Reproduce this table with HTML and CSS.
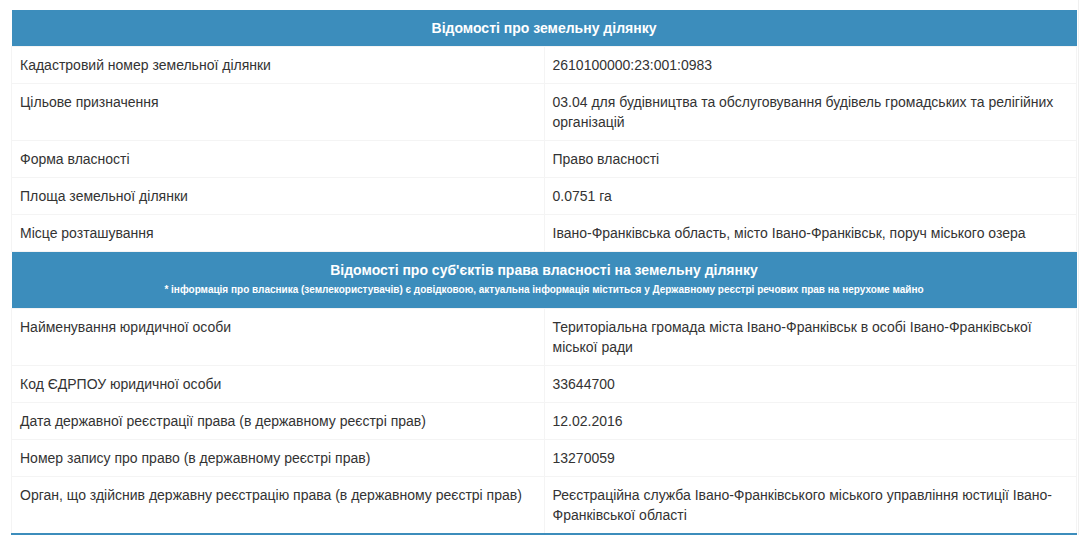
FILE: index.html
```html
<!DOCTYPE html>
<html lang="uk">
<head>
<meta charset="utf-8">
<link rel="stylesheet" href="styles.css">
</head>
<body>
<div class="box">
<table class="info">
  <tr><th colspan="2" class="head">Відомості про земельну ділянку</th></tr>
  <tr><td>Кадастровий номер земельної ділянки</td><td>2610100000:23:001:0983</td></tr>
  <tr><td>Цільове призначення</td><td>03.04 для будівництва та обслуговування будівель громадських та релігійних організацій</td></tr>
  <tr><td>Форма власності</td><td>Право власності</td></tr>
  <tr><td>Площа земельної ділянки</td><td>0.0751 га</td></tr>
  <tr><td>Місце розташування</td><td>Івано-Франківська область, місто Івано-Франківськ, поруч міського озера</td></tr>
  <tr><th colspan="2" class="head">Відомості про суб'єктів права власності на земельну ділянку<small class="note">* інформація про власника (землекористувачів) є довідковою, актуальна інформація міститься у Державному реєстрі речових прав на нерухоме майно</small></th></tr>
  <tr><td>Найменування юридичної особи</td><td>Територіальна громада міста Івано-Франківськ в особі Івано-Франківської міської ради</td></tr>
  <tr><td>Код ЄДРПОУ юридичної особи</td><td>33644700</td></tr>
  <tr><td>Дата державної реєстрації права (в державному реєстрі прав)</td><td>12.02.2016</td></tr>
  <tr><td>Номер запису про право (в державному реєстрі прав)</td><td>13270059</td></tr>
  <tr class="last"><td>Орган, що здійснив державну реєстрацію права (в державному реєстрі прав)</td><td>Реєстраційна служба Івано-Франківського міського управління юстиції Івано-Франківської області</td></tr>
</table>
</div>
</body>
</html>
```
FILE: styles.css
```css
html, body {
  margin: 0;
  padding: 0;
  background: #fff;
}
body {
  font-family: "Liberation Sans", Arial, sans-serif;
  font-size: 14px;
  line-height: 20px;
  color: #333;
}
.box {
  padding: 10px 0 0 11px;
  width: 1067px;
  border-right: 1px solid #f0f0f0;
  min-height: 525px;
}
.info {
  width: 1066px;
  border-collapse: collapse;
  table-layout: fixed;
  border-bottom: 2px solid #3c8dbc;
}
.info td {
  width: 50%;
  padding: 8px;
  vertical-align: top;
  border: 1px solid #f4f4f4;
}
.info th.head {
  background: #3c8dbc;
  color: #fff;
  font-weight: bold;
  text-align: center;
  padding: 8px;
  border: 0;
}
.note {
  display: block;
  font-size: 10px;
  font-weight: bold;
  line-height: 20px;
}
```
